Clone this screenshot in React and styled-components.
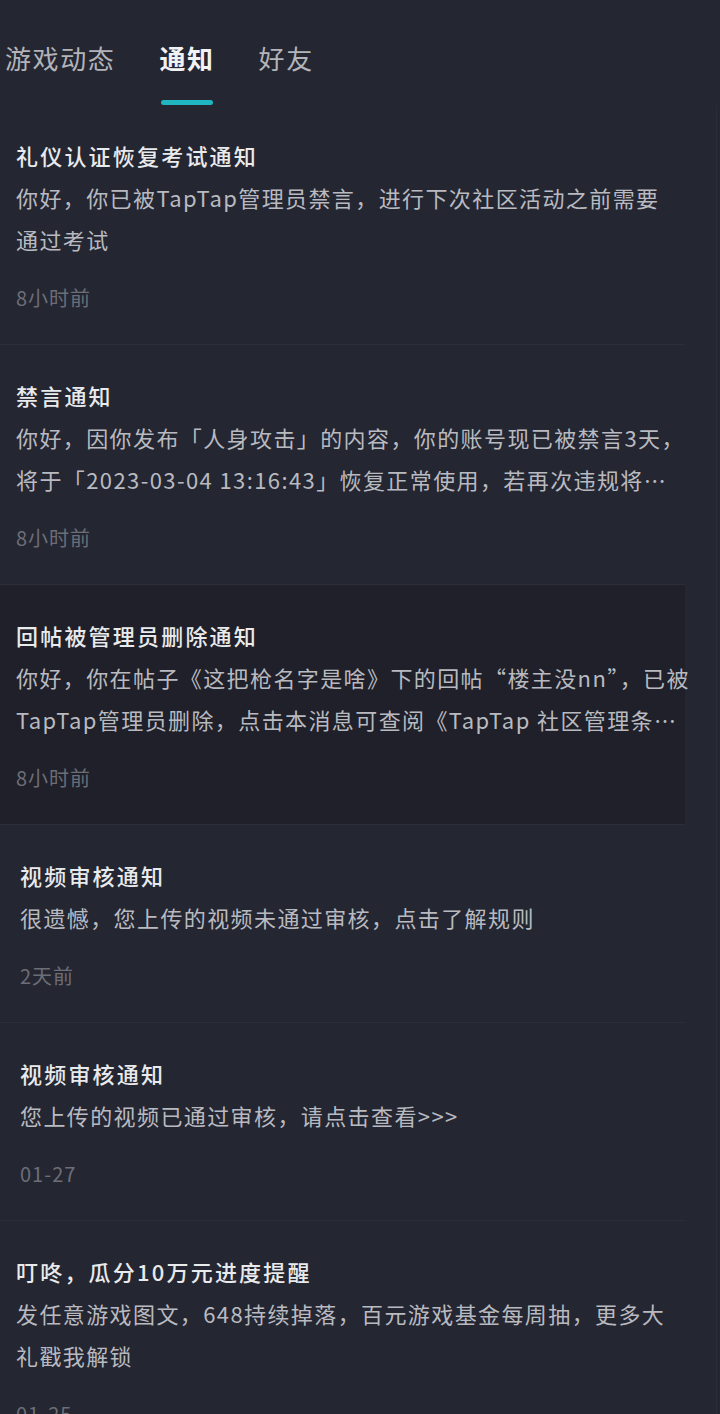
import React from "react";
import styled, { createGlobalStyle, css } from "styled-components";

const GlobalStyle = createGlobalStyle`
  html, body {
    margin: 0;
    padding: 0;
    background: #242632;
  }
  body {
    font-family: "Noto Sans CJK SC", "Noto Sans", sans-serif;
    -webkit-font-smoothing: antialiased;
  }
`;

const Page = styled.div`
  width: 720px;
  height: 1414px;
  overflow: hidden;
  background: #242632;
  position: relative;
`;

const TabBar = styled.div`
  display: flex;
  gap: 44px;
  padding: 40px 0 0 5px;
  height: 105px;
  box-sizing: border-box;
`;

const Tab = styled.div`
  display: flex;
  flex-direction: column;
  align-items: center;
`;

const TabLabel = styled.span`
  font-size: 26px;
  line-height: 36px;
  color: #b3b4b9;
  letter-spacing: 1.6px;
  ${props =>
    props.active &&
    css`
      color: #f2f2f4;
      font-weight: 700;
  `}
`;

const Indicator = styled.span`
  margin-top: 24px;
  width: 52px;
  height: 5px;
  border-radius: 3px;
  background: ${props => (props.active ? "#20b6c1" : "transparent")};
`;

const List = styled.div`
  width: 685px;
`;

const Item = styled.div`
  padding: 34px 0 32px ${props => props.indent}px;
  border-bottom: 1px solid #2c2e3a;
  ${props =>
    props.dim &&
    css`
      background: #1f2029;
  `}
`;

const Title = styled.div`
  font-size: 22px;
  line-height: 32px;
  font-weight: 500;
  color: #e9eaec;
  letter-spacing: 2.2px;
  white-space: nowrap;
`;

const Body = styled.div`
  margin-top: 5px;
`;

const Line = styled.div`
  font-size: 22px;
  line-height: 42px;
  color: #b9bac0;
  letter-spacing: 1.4px;
  white-space: nowrap;
`;

const Time = styled.div`
  margin-top: 24px;
  font-size: 20px;
  line-height: 28px;
  letter-spacing: 1px;
  color: #6c6e77;
`;

const ScrollEdge = styled.div`
  position: absolute;
  top: 105px;
  right: 3px;
  width: 1px;
  bottom: 0;
  background: #2a2c38;
`;

const notices = [
  {
    title: "礼仪认证恢复考试通知",
    lines: ["你好，你已被TapTap管理员禁言，进行下次社区活动之前需要", "通过考试"],
    time: "8小时前",
    indent: 16,
  },
  {
    title: "禁言通知",
    lines: [
      "你好，因你发布「人身攻击」的内容，你的账号现已被禁言3天，",
      "将于「2023-03-04 13:16:43」恢复正常使用，若再次违规将…",
    ],
    time: "8小时前",
    indent: 16,
  },
  {
    title: "回帖被管理员删除通知",
    lines: [
      "你好，你在帖子《这把枪名字是啥》下的回帖“楼主没nn”，已被",
      "TapTap管理员删除，点击本消息可查阅《TapTap 社区管理条…",
    ],
    time: "8小时前",
    indent: 16,
    dim: true,
  },
  {
    title: "视频审核通知",
    lines: ["很遗憾，您上传的视频未通过审核，点击了解规则"],
    time: "2天前",
    indent: 20,
  },
  {
    title: "视频审核通知",
    lines: ["您上传的视频已通过审核，请点击查看>>>"],
    time: "01-27",
    indent: 20,
  },
  {
    title: "叮咚，瓜分10万元进度提醒",
    lines: ["发任意游戏图文，648持续掉落，百元游戏基金每周抽，更多大", "礼戳我解锁"],
    time: "01-25",
    indent: 16,
  },
];

const tabs = ["游戏动态", "通知", "好友"];

export default function App() {
  return (
    <Page>
      <GlobalStyle />
      <TabBar>
        {tabs.map(t => (
          <Tab key={t}>
            <TabLabel active={t === "通知"}>{t}</TabLabel>
            <Indicator active={t === "通知"} />
          </Tab>
        ))}
      </TabBar>
      <List>
        {notices.map((n, i) => (
          <Item key={i} indent={n.indent} dim={n.dim}>
            <Title>{n.title}</Title>
            <Body>
              {n.lines.map((l, j) => (
                <Line key={j}>{l}</Line>
              ))}
            </Body>
            <Time>{n.time}</Time>
          </Item>
        ))}
      </List>
      <ScrollEdge />
    </Page>
  );
}
